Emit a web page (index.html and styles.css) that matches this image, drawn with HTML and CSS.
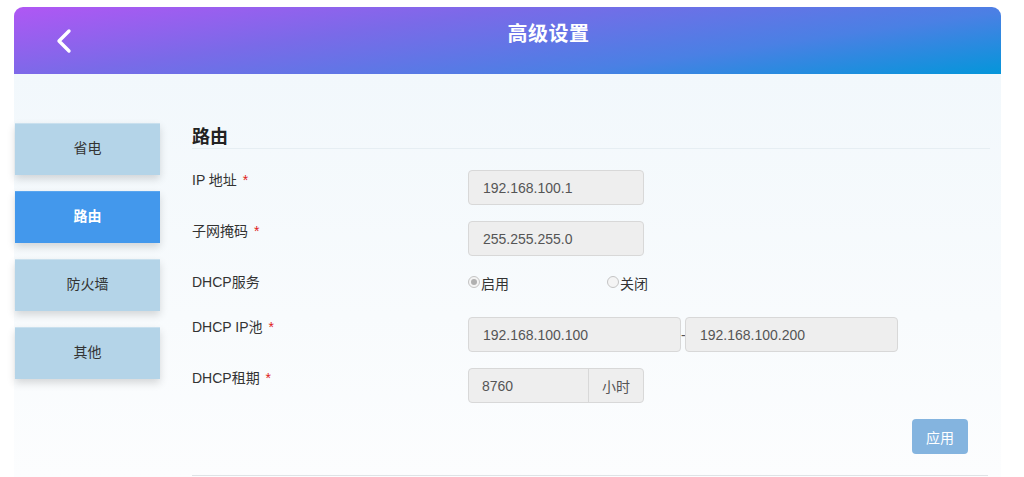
FILE: index.html
```html
<!DOCTYPE html>
<html lang="zh">
<head>
<meta charset="utf-8">
<title>高级设置</title>
<link rel="stylesheet" href="styles.css">
</head>
<body>
<div class="page">
  <header class="topbar">
    <a class="back" href="#" aria-label="返回">
      <svg width="20" height="26" viewBox="0 0 20 26"><path d="M15 3 L5 13 L15 23" fill="none" stroke="#fff" stroke-width="3.4" stroke-linecap="round" stroke-linejoin="round"/></svg>
    </a>
    <h1 class="title">高级设置</h1>
  </header>
  <div class="body">
    <nav class="side">
      <div class="side-item">省电</div>
      <div class="side-item active">路由</div>
      <div class="side-item">防火墙</div>
      <div class="side-item">其他</div>
    </nav>
    <main class="content">
      <h2 class="section-title">路由</h2>
      <div class="form">
        <div class="row">
          <div class="label">IP 地址 <span class="req">*</span></div>
          <div class="field"><div class="input w175">192.168.100.1</div></div>
        </div>
        <div class="row">
          <div class="label">子网掩码 <span class="req">*</span></div>
          <div class="field"><div class="input w175">255.255.255.0</div></div>
        </div>
        <div class="row radio-row">
          <div class="label">DHCP服务</div>
          <div class="field radios">
            <label class="radio"><span class="dot checked"></span>启用</label>
            <label class="radio"><span class="dot"></span>关闭</label>
          </div>
        </div>
        <div class="row">
          <div class="label">DHCP IP池 <span class="req">*</span></div>
          <div class="field">
            <div class="input w212">192.168.100.100</div>
            <span class="dash">-</span>
            <div class="input w212">192.168.100.200</div>
          </div>
        </div>
        <div class="row">
          <div class="label">DHCP租期 <span class="req">*</span></div>
          <div class="field">
            <div class="group">
              <div class="gin">8760</div>
              <div class="addon">小时</div>
            </div>
          </div>
        </div>
        <div class="actions"><button class="apply">应用</button></div>
      </div>
      <div class="bottom-line"></div>
    </main>
  </div>
</div>
</body>
</html>
```
FILE: styles.css
```css
html, body {
  margin: 0;
  padding: 0;
  background: #ffffff;
  font-family: "Liberation Sans", Arial, "Noto Sans CJK SC", sans-serif;
  color: #333;
  overflow: hidden;
}
.page {
  width: 987px;
  margin: 7px 0 0 14px;
}
.topbar {
  height: 67px;
  border-radius: 9px 9px 0 0;
  background: linear-gradient(172deg, #b057f4 0%, #7a6ae8 35%, #4a80e4 70%, #0496da 100%);
  display: flex;
  align-items: center;
  justify-content: center;
  position: relative;
}
.back {
  position: absolute;
  left: 40px;
  top: 21px;
  display: block;
  width: 20px;
  height: 26px;
}
.title {
  margin: 0 0 16px 0;
  color: #fff;
  font-size: 20px;
  font-weight: bold;
  letter-spacing: 0.5px;
  padding-left: 82px;
}
.body {
  display: flex;
  background: linear-gradient(180deg, #f2f8fc 0%, #f8fbfd 60%, #fcfdfe 100%);
  height: 403px;
  padding-top: 49px;
  box-sizing: border-box;
}
.side {
  width: 145px;
  margin-left: 1px;
  display: flex;
  flex-direction: column;
  gap: 16px;
}
.side-item {
  height: 52px;
  background: #b4d4e8;
  display: flex;
  align-items: center;
  justify-content: center;
  font-size: 14px;
  color: #333;
  box-shadow: 0 4px 8px rgba(0, 0, 0, 0.15);
  border-top: 1px solid #c9e0ee;
  box-sizing: border-box;
  padding-bottom: 5px;
}
.side-item.active {
  background: #4398ec;
  color: #fff;
  font-weight: bold;
  border-top-color: #5aa6ef;
}
.content {
  margin-left: 32px;
  width: 798px;
}
.section-title {
  margin: 0;
  font-size: 18px;
  font-weight: bold;
  color: #222;
  height: 25px;
  line-height: 28px;
  border-bottom: 1px solid #e6eef3;
}
.form {
  padding-top: 21px;
}
.row {
  display: flex;
  height: 35px;
  margin-bottom: 16px;
}
.row.radio-row {
  height: 29px;
  margin-bottom: 16px;
}
.label {
  width: 276px;
  font-size: 14px;
  line-height: 20px;
  color: #333;
}
.req {
  color: #e02020;
  margin-left: 2px;
}
.field {
  display: flex;
  align-items: center;
}
.input {
  height: 35px;
  box-sizing: border-box;
  background: #eeeeee;
  border: 1px solid #d8d8d8;
  border-radius: 4px;
  padding-left: 14px;
  font-size: 14px;
  color: #555;
  display: flex;
  align-items: center;
}
.w175 { width: 176px; }
.w212 { width: 213px; }
.dash {
  width: 4px;
  font-size: 14px;
  color: #555;
  text-align: center;
}
.radios {
  align-items: flex-start;
  height: 29px;
  padding-top: 1px;
  box-sizing: border-box;
}
.radio {
  display: flex;
  align-items: center;
  font-size: 14px;
  color: #333;
  width: 139px;
}
.dot {
  width: 12px;
  height: 12px;
  box-sizing: border-box;
  border: 1px solid #c4c4c4;
  border-radius: 50%;
  background: #f4f4f4;
  margin-right: 1px;
  position: relative;
  top: -1px;
}
.dot.checked::after {
  content: "";
  position: absolute;
  left: 2px;
  top: 2px;
  width: 6px;
  height: 6px;
  border-radius: 50%;
  background: #b0b0b0;
}
.group {
  display: flex;
  width: 176px;
  height: 35px;
  box-sizing: border-box;
  border: 1px solid #d8d8d8;
  border-radius: 4px;
  background: #eeeeee;
  overflow: hidden;
}
.gin {
  flex: 1;
  padding-left: 13px;
  font-size: 14px;
  color: #555;
  display: flex;
  align-items: center;
}
.addon {
  width: 54px;
  border-left: 1px solid #d8d8d8;
  font-size: 14px;
  color: #555;
  display: flex;
  align-items: center;
  justify-content: center;
}
.actions {
  display: flex;
  justify-content: flex-end;
  padding-right: 22px;
}
.apply {
  width: 56px;
  height: 35px;
  border: none;
  border-radius: 4px;
  background: #84b4df;
  color: #fff;
  font-size: 14px;
  font-family: "Liberation Sans", Arial, "Noto Sans CJK SC", sans-serif;
}
.bottom-line {
  margin-top: 21px;
  width: 796px;
  border-top: 1px solid #dfe3e6;
}
```
